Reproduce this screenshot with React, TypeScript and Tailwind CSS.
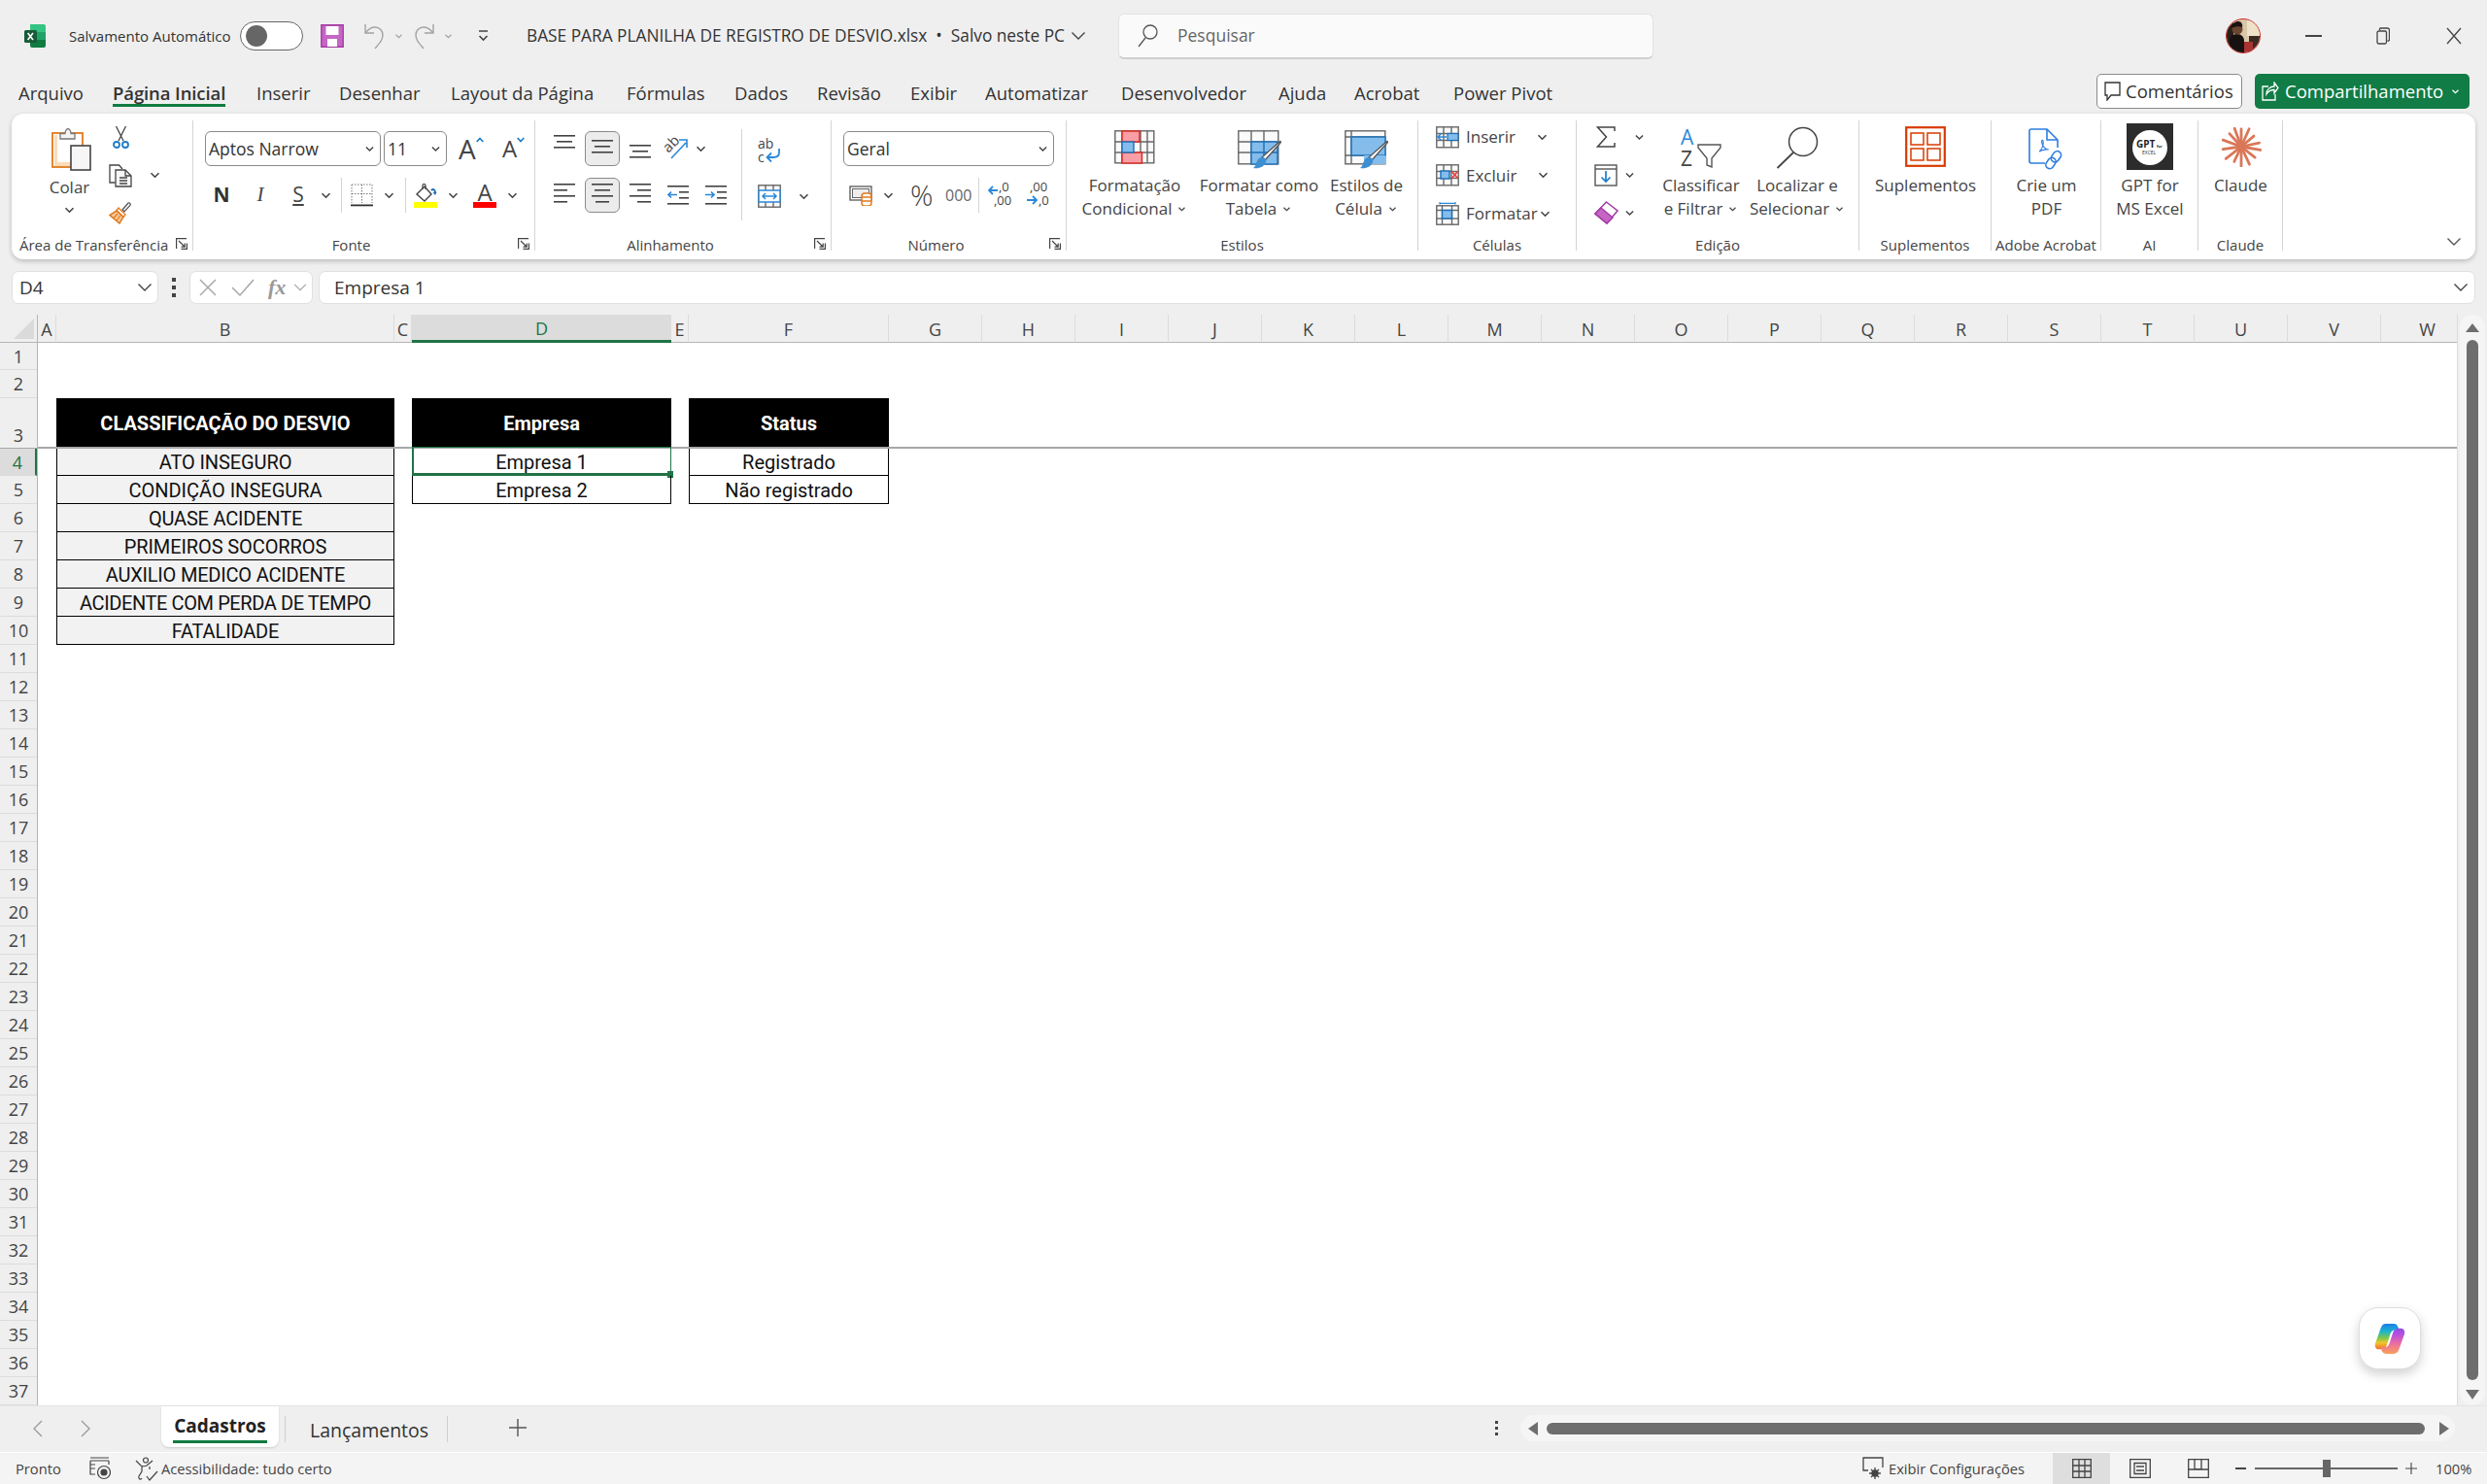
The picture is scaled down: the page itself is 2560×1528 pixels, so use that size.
import React from "react";

const dark = "#424242";
const blue = "#2b88d8";

function Chev({ className = "", color = "#444" }: { className?: string; color?: string }) {
  return (
    <svg width="11" height="7" viewBox="0 0 11 7" className={className} fill="none">
      <path d="M1.5 1.2 5.5 5.2 9.5 1.2" stroke={color} strokeWidth="1.6" />
    </svg>
  );
}

function BigChev({ className = "", color = "#555" }: { className?: string; color?: string }) {
  return (
    <svg width="16" height="10" viewBox="0 0 16 10" className={className} fill="none">
      <path d="M1.5 1.5 8 8 14.5 1.5" stroke={color} strokeWidth="1.4" />
    </svg>
  );
}

function Launcher() {
  return (
    <svg width="12" height="12" viewBox="0 0 12 12" fill="none" stroke="#444" strokeWidth="1.2">
      <path d="M.6 11V.6H11M11.4 5.5v5.9H5.5M3 3l6 6M9.2 5.5v3.7H5.5" />
    </svg>
  );
}

function ExcelIcon() {
  return (
    <svg width="24" height="24" viewBox="0 0 24 24" className="ml-[24px]">
      <path d="M7 0h14a2 2 0 0 1 2 2v6H7z" fill="#33c481" />
      <path d="M7 8h16v8H7z" fill="#21a366" />
      <path d="M7 16h16v6a2 2 0 0 1-2 2H9a2 2 0 0 1-2-2z" fill="#107c41" />
      <rect x="1" y="6" width="13" height="13" rx="1.5" fill="#185c37" />
      <path d="m4.6 9 5.4 7M10 9l-5.4 7" stroke="#fff" strokeWidth="1.6" />
    </svg>
  );
}

function SaveIcon() {
  return (
    <svg width="24" height="24" viewBox="0 0 24 24" className="ml-[18px]">
      <path d="M.8.8h22.4v22.4H.8z" fill="#c566c5" stroke="#a33ba3" strokeWidth="1.4" />
      <rect x="5.5" y="2" width="13" height="9" fill="#fff" />
      <rect x="7" y="15" width="10" height="8" fill="#fff" />
    </svg>
  );
}

function UndoIcon({ flip = false, className = "" }: { flip?: boolean; className?: string }) {
  return (
    <svg width="22" height="28" viewBox="0 0 22 28" fill="none" stroke="#a3a3a3" strokeWidth="1.4" className={className}>
      <g transform={flip ? "translate(22 0) scale(-1 1)" : undefined}>
        <path d="M2 2v9h9" />
        <path d="M2.5 10.5C6 6 9 5 12 5c5 0 8 4 8 8 0 5-3 8-8 14" />
      </g>
    </svg>
  );
}

function Lines({ rows, w = 22, color = dark }: { rows: [number, number][]; w?: number; color?: string }) {
  return (
    <svg width={w} height={rows.length * 6 + 1} viewBox={`0 0 ${w} ${rows.length * 6 + 1}`}>
      {rows.map((r, i) => (
        <rect key={i} x={r[0]} y={i * 6} width={r[1] - r[0]} height="1.6" fill={color} />
      ))}
    </svg>
  );
}

function IndentIcon({ right = false }: { right?: boolean }) {
  return (
    <svg width="22" height="20" viewBox="0 0 22 20">
      <rect x="0" y="0" width="22" height="1.6" fill={dark} />
      <rect x="12" y="6" width="10" height="1.6" fill={dark} />
      <rect x="12" y="12" width="10" height="1.6" fill={dark} />
      <rect x="0" y="18" width="22" height="1.6" fill={dark} />
      {right ? (
        <path d="M0 9.5h9M6 6.5l3 3-3 3" fill="none" stroke={blue} strokeWidth="1.7" />
      ) : (
        <path d="M10 9.5H1M4 6.5l-3 3 3 3" fill="none" stroke={blue} strokeWidth="1.7" />
      )}
    </svg>
  );
}

function TableGrid({ x = 0.8, y = 0.8, w, h, cols, rows }: { x?: number; y?: number; w: number; h: number; cols: number[]; rows: number[] }) {
  return (
    <g fill="none" stroke="#666" strokeWidth="1.4">
      <rect x={x} y={y} width={w} height={h} fill="#fafafa" />
      {cols.map((c) => (
        <path key={"c" + c} d={`M${c} ${y}v${h}`} />
      ))}
      {rows.map((r) => (
        <path key={"r" + r} d={`M${x} ${r}h${w}`} />
      ))}
    </g>
  );
}

function CondFormatIcon() {
  return (
    <svg width="42" height="35" viewBox="0 0 42 35">
      <TableGrid w={40} h={33} cols={[8, 27, 34]} rows={[12, 23]} />
      <rect x="8" y="1" width="18" height="11" fill="#f99ea4" stroke="#d9261c" strokeWidth="1.4" />
      <rect x="8" y="23" width="20.5" height="11" fill="#f99ea4" stroke="#d9261c" strokeWidth="1.4" />
      <rect x="8" y="12" width="12" height="11" fill="#84bcec" stroke="#1a6fb8" strokeWidth="1.4" />
    </svg>
  );
}

function Brush() {
  return (
    <g>
      <path d="M43 12c1-1 2 0 1 1L28 31l-3-3z" fill="#fff" stroke="#555" strokeWidth="1.3" />
      <path d="M25 28c3 0 5 2 4 5-2 5-7 7-13 6 3-2 2-4 4-7 1-3 3-4 5-4z" fill="#3d8fd1" />
    </g>
  );
}

function TableStyleIcon() {
  return (
    <svg width="45" height="41" viewBox="0 0 45 41">
      <TableGrid w={41} h={34} cols={[14, 27]} rows={[12, 23]} />
      <rect x="14" y="12" width="27" height="23" fill="#84bcec" stroke="#1a6fb8" strokeWidth="1.4" />
      <path d="M27 12v23M14 23h27" stroke="#1a6fb8" strokeWidth="1.4" />
      <Brush />
    </svg>
  );
}

function CellStyleIcon() {
  return (
    <svg width="45" height="41" viewBox="0 0 45 41">
      <TableGrid w={41} h={34} cols={[7]} rows={[7, 26]} />
      <rect x="7" y="7" width="35" height="19" fill="#84bcec" stroke="#1a6fb8" strokeWidth="1.4" />
      <rect x="20" y="26" width="22" height="9" fill="#84bcec" />
      <Brush />
    </svg>
  );
}

function InsertIcon() {
  return (
    <svg width="24" height="23" viewBox="0 0 24 23">
      <TableGrid w={22.4} h={21} cols={[8, 16]} rows={[7.5, 14.5]} />
      <rect x="12" y="7.5" width="11" height="7" fill="#84bcec" stroke="#1a6fb8" strokeWidth="1.2" />
      <path d="M11 11H2M5.5 7.5 2 11l3.5 3.5" fill="none" stroke={blue} strokeWidth="1.6" />
    </svg>
  );
}

function DeleteIcon() {
  return (
    <svg width="24" height="23" viewBox="0 0 24 23">
      <TableGrid w={22.4} h={21} cols={[8, 16]} rows={[7.5, 14.5]} />
      <rect x="5" y="7" width="9" height="8" fill="#84bcec" stroke="#1a6fb8" strokeWidth="1.4" />
      <path d="m16.5 7.5 6 7M22.5 7.5l-6 7" stroke="#e8403a" strokeWidth="1.8" />
    </svg>
  );
}

function FormatIcon() {
  return (
    <svg width="24" height="24" viewBox="0 0 24 24">
      <g transform="translate(0 3)">
        <TableGrid w={22.4} h={19.4} cols={[6.5, 16.5]} rows={[5.5, 14]} />
        <rect x="6.5" y="5.5" width="10" height="8.5" fill="#84bcec" stroke="#1a6fb8" strokeWidth="1.4" />
      </g>
      <path d="M4 1.3h16M4 0v2.6M20 0v2.6" stroke={blue} strokeWidth="1.2" fill="none" />
    </svg>
  );
}

function ClipboardIcon() {
  return (
    <svg width="41" height="45" viewBox="0 0 41 45" className="ml-[4px]">
      <rect x="1" y="6" width="31" height="35" fill="#fff" stroke="#e07a1f" strokeWidth="1.8" />
      <path d="M3 36h17v4H3z" fill="#fbdcb8" />
      <path d="M3 8h3v28H3z" fill="#fbdcb8" />
      <path d="M9 12V6.5h5c0-3 2-5 3-5s3 2 3 5h4V12z" fill="#f4f4f4" stroke="#777" strokeWidth="1.3" />
      <rect x="20" y="19" width="20" height="25" fill="#f6f6f6" stroke="#444" strokeWidth="1.6" />
    </svg>
  );
}

function ScissorsIcon() {
  return (
    <svg width="17" height="25" viewBox="0 0 17 25" fill="none">
      <path d="M3.5 1 11 16M13.5 1 6 16" stroke="#444" strokeWidth="1.3" />
      <circle cx="4" cy="20" r="3" stroke="#1f7cc7" strokeWidth="1.8" />
      <circle cx="13" cy="20" r="3" stroke="#1f7cc7" strokeWidth="1.8" />
    </svg>
  );
}

function CopyIcon() {
  return (
    <svg width="24" height="24" viewBox="0 0 24 24" fill="none" stroke="#444" strokeWidth="1.3">
      <path d="M6.5 19H1V1h9.5l3.5 4" />
      <path d="M7 6h10l6 6v11H7z" fill="#f7f7f7" />
      <path d="M17 6v6h6M11 14h8M11 17h8M11 20h8" />
    </svg>
  );
}

function PainterIcon() {
  return (
    <svg width="24" height="23" viewBox="0 0 24 23">
      <path d="m14 8 6-7c1-1 3 1 2 2.500l-6 6.500z" fill="#f3f3f3" stroke="#555" strokeWidth="1.2" />
      <path d="M10 6 17 13l-2 2.500L8 8.500z" fill="#fff" stroke="#e07a1f" strokeWidth="1.3" />
      <path d="M8 9 15 15.500 11 22 1 13.500z" fill="#f7c89a" stroke="#e07a1f" strokeWidth="1.5" />
      <path d="M5 16.500 9 12M8 19l4-5" stroke="#e07a1f" strokeWidth="1.2" />
    </svg>
  );
}

function BordersIcon() {
  return (
    <svg width="23" height="24" viewBox="0 0 23 24">
      <path d="M1 1h21v19M1 1v19M11.500 1v19M1 10.500h21" fill="none" stroke="#777" strokeWidth="1" strokeDasharray="1.500 1.500" />
      <rect x="0" y="21.500" width="23" height="1.800" fill="#333" />
    </svg>
  );
}

function FillIcon() {
  return (
    <svg width="24" height="25" viewBox="0 0 24 25">
      <path d="m11 3 7 8-7 7-8-7z" fill="#fff" stroke="#444" strokeWidth="1.4" />
      <path d="M9 6 V2c0-2 3-2 3 0v4" fill="none" stroke="#444" strokeWidth="1.2" />
      <path d="M18 7c2-2 4-1 4 3" fill="none" stroke="#1f6fb8" strokeWidth="2" />
      <path d="m19.500 9 2.500 3 1.500-3z" fill="#1f6fb8" />
      <rect x="0" y="19" width="24" height="6" fill="#ffff00" />
    </svg>
  );
}

function SumIcon() {
  return (
    <svg width="20" height="22" viewBox="0 0 20 22" fill="none" stroke="#444" strokeWidth="1.500" className="ml-[2px]">
      <path d="M19 5V1H1.500l9 10-9 10H19v-4" />
    </svg>
  );
}

function FillDownIcon() {
  return (
    <svg width="24" height="23" viewBox="0 0 24 23" fill="none">
      <rect x="1" y="1" width="22" height="21" fill="#fff" stroke="#555" strokeWidth="1.4" />
      <path d="M1 5h22" stroke="#555" strokeWidth="1.4" />
      <path d="M12 7v11M7.500 13.500 12 18l4.500-4.500" stroke="#1f7cc7" strokeWidth="1.7" />
    </svg>
  );
}

function EraserIcon() {
  return (
    <svg width="25" height="24" viewBox="0 0 25 24">
      <path d="M12.500 1 24 10 13 23 1 13z" fill="#fff" stroke="#a33ba3" strokeWidth="1.5" />
      <path d="M7 7 19 17 13 23 1 13z" fill="#c566c5" stroke="#a33ba3" strokeWidth="1.5" />
    </svg>
  );
}

function WrapIcon() {
  return (
    <svg width="24" height="28" viewBox="0 0 24 28" className="overflow-visible">
      <text x="0" y="11" fontSize="14" fill="#444">ab</text>
      <text x="0" y="25" fontSize="14" fill="#444">c</text>
      <path d="M22 11v4c0 4-3 5-6 5H10M14 15.500 9.500 20l4.500 4.500" fill="none" stroke={blue} strokeWidth="1.8" />
    </svg>
  );
}

function MergeIcon() {
  return (
    <svg width="24" height="24" viewBox="0 0 24 24">
      <TableGrid w={22.4} h={22.4} cols={[8, 16]} rows={[7, 17]} />
      <rect x="1" y="6" width="22" height="12" fill="#fff" stroke={blue} strokeWidth="1.5" />
      <path d="M5 12h14M8 9l-3 3 3 3M16 9l3 3-3 3" fill="none" stroke={blue} strokeWidth="1.5" />
    </svg>
  );
}

function OrientIcon() {
  return (
    <svg width="25" height="23" viewBox="0 0 25 23" className="overflow-visible">
      <text x="0" y="0" fontSize="15" fill="#444" transform="translate(5 17) rotate(-45)">ab</text>
      <path d="M8 22 23 6M16 3h8v8" fill="none" stroke={blue} strokeWidth="1.6" />
    </svg>
  );
}

function AccountingIcon() {
  return (
    <svg width="24" height="21" viewBox="0 0 24 21">
      <rect x="1" y="1" width="22" height="14" fill="#fff" stroke="#555" strokeWidth="1.3" />
      <rect x="3.500" y="3.500" width="17" height="9" fill="#eee" stroke="#666" strokeWidth="1" />
      <rect x="13" y="8" width="10" height="13" rx="3" fill="#fff" stroke="#e07a1f" strokeWidth="1.5" />
      <path d="M13 12h10M13 16h10" stroke="#e07a1f" strokeWidth="1.5" />
    </svg>
  );
}

function SortIcon() {
  return (
    <svg width="42" height="42" viewBox="0 0 42 42" className="overflow-visible">
      <text x="0" y="18" fontSize="21" fill={blue}>A</text>
      <text x="0" y="40" fontSize="21" fill="#444">Z</text>
      <path d="M18 18h23v3l-9 11v9l-5-2v-7l-9-11z" fill="#fff" stroke="#555" strokeWidth="1.4" />
    </svg>
  );
}

function FindIcon() {
  return (
    <svg width="44" height="44" viewBox="0 0 44 44" fill="none" stroke="#444">
      <circle cx="28" cy="16" r="14.500" strokeWidth="1.5" />
      <path d="M18 27 1.500 43" strokeWidth="1.8" />
    </svg>
  );
}

function AddInIcon() {
  return (
    <svg width="42" height="42" viewBox="0 0 42 42" fill="none" stroke="#d83b01">
      <rect x="1.200" y="1.200" width="39.600" height="39.600" strokeWidth="2.200" />
      <rect x="6" y="7" width="13" height="12" strokeWidth="1.500" />
      <rect x="23" y="7" width="13" height="12" strokeWidth="1.500" />
      <rect x="6" y="23" width="13" height="12" strokeWidth="1.500" />
      <rect x="23" y="23" width="13" height="12" strokeWidth="1.500" />
    </svg>
  );
}

function PdfIcon() {
  return (
    <svg width="38" height="43" viewBox="0 0 38 43" fill="none">
      <path d="M17 36H3a2 2 0 0 1-2-2V3a2 2 0 0 1 2-2h16l11 11v8" stroke="#2d7de0" strokeWidth="1.6" />
      <path d="M19 1v11h11" stroke="#2d7de0" strokeWidth="1.6" fill="none" />
      <path d="M11 24c3-2 5-8 4-11-1-2-2 0-1 3s4 6 6 6-4-1-9 2z" stroke="#2d7de0" strokeWidth="1.100" />
      <rect x="24.500" y="23" width="8" height="12" rx="4" transform="rotate(35 28 29)" stroke="#2d7de0" strokeWidth="1.600" />
      <rect x="19" y="30" width="8" height="12" rx="4" transform="rotate(35 23 36)" stroke="#2d7de0" strokeWidth="1.600" />
    </svg>
  );
}

function GptIcon() {
  return (
    <svg width="48" height="48" viewBox="0 0 48 48">
      <rect width="48" height="48" fill="#2c2c2c" />
      <circle cx="24" cy="25" r="18" fill="#fff" />
      <text x="10" y="25" fontSize="10" fontWeight="700" fill="#222">GPT</text>
      <text x="31" y="25" fontSize="4" fontWeight="700" fill="#222">for</text>
      <text x="16" y="32" fontSize="5" fill="#333">EXCEL</text>
    </svg>
  );
}

function ClaudeIcon() {
  const rays: [number, number][] = [
    [0, 18], [24, 20], [50, 17], [78, 19], [100, 20], [128, 18], [155, 20], [180, 20], [205, 17], [232, 20], [262, 19], [290, 20], [318, 18], [340, 20],
  ];
  return (
    <svg width="42" height="42" viewBox="-21 -21 42 42" stroke="#d97757" strokeWidth="2.800" strokeLinecap="round">
      {rays.map(([a, l]) => (
        <line key={a} x1="0" y1="0" x2={Math.sin((a * Math.PI) / 180) * l} y2={-Math.cos((a * Math.PI) / 180) * l} />
      ))}
    </svg>
  );
}

function Avatar() {
  return (
    <svg width="36" height="36" viewBox="0 0 36 36" className="ml-[589px]">
      <defs>
        <clipPath id="av">
          <circle cx="18" cy="18" r="17" />
        </clipPath>
      </defs>
      <circle cx="18" cy="18" r="17.500" fill="#d8c7a8" stroke="#d02c2c" />
      <g clipPath="url(#av)">
        <rect x="22" y="2" width="14" height="16" fill="#eee2c8" />
        <rect x="24" y="18" width="12" height="18" fill="#3a2a20" />
        <rect x="0" y="0" width="8" height="36" fill="#2a201a" />
        <path d="M4 36V22c0-4 4-6 8-6s7 3 7 7v13z" fill="#17120f" />
        <circle cx="12" cy="11" r="5.500" fill="#6b4630" />
        <path d="M6 10c0-5 4-7 7-7s5 3 4 6c-3-1-7-1-11 1z" fill="#1b1410" />
        <rect x="19" y="24" width="9" height="12" fill="#a33" />
      </g>
    </svg>
  );
}

function Copilot() {
  return (
    <svg width="32" height="33" viewBox="0 0 30 32">
      <defs>
        <linearGradient id="cl" x1="0" y1="0" x2="0" y2="1">
          <stop offset="0" stopColor="#1d7ee8" />
          <stop offset="0.3" stopColor="#1bb5cf" />
          <stop offset="0.55" stopColor="#7cc84a" />
          <stop offset="0.75" stopColor="#f0c52c" />
          <stop offset="1" stopColor="#f26a2e" />
        </linearGradient>
        <linearGradient id="cr" x1="0" y1="0" x2="0" y2="1">
          <stop offset="0" stopColor="#f9a05a" />
          <stop offset="0.4" stopColor="#ea6ea0" />
          <stop offset="0.75" stopColor="#b650dc" />
          <stop offset="1" stopColor="#8f4de8" />
        </linearGradient>
      </defs>
      <path d="M11 1h8c2.500 0 3.500 1.500 4.500 4l.7 2.500H20c-3 0-4 2-5 5l-3 9.500c-1 3-3 4.500-6 4.500H4c-3 0-4.500-3-3.500-6L6 5c1-2.500 2.500-4 5-4z" fill="url(#cl)" />
      <path d="M11 1h8c2.500 0 3.500 1.500 4.500 4l.7 2.500H20c-3 0-4 2-5 5l-3 9.500c-1 3-3 4.500-6 4.500H4c-3 0-4.500-3-3.500-6L6 5c1-2.500 2.500-4 5-4z" fill="url(#cr)" transform="rotate(180 15 16)" />
    </svg>
  );
}

function Group({ w, label, launcher = false, labelClass = "", children }: { w: string; label: string; launcher?: boolean; labelClass?: string; children?: React.ReactNode }) {
  return (
    <div className={`${w} h-[134px] shrink-0 flex flex-col border-r border-[#d4d4d4]`}>
      <div className="h-[119px] shrink-0 flex">{children}</div>
      <div className="h-[18px] shrink-0 flex items-center text-[15px] leading-[18px] text-[#444]">
        <span className={`flex-1 text-center whitespace-nowrap ${labelClass}`}>{label}</span>
        {launcher && (
          <span className="w-[26px] flex justify-end pr-[5px] -mt-[2px]">
            <Launcher />
          </span>
        )}
      </div>
    </div>
  );
}

function BigBtn({ w, icon, iconBox = "h-[45px]", top = "pt-[10px]", lines, chev = false }: { w: string; icon: React.ReactNode; iconBox?: string; top?: string; lines: string[]; chev?: boolean }) {
  return (
    <div className={`${w} ${top} shrink-0 flex flex-col items-center`}>
      <div className={`${iconBox} flex items-start justify-center`}>{icon}</div>
      {lines.map((l, i) => (
        <div key={l} className="h-[24px] leading-[24px] text-[17px] text-[#444] whitespace-nowrap flex items-center">
          {l}
          {chev && i === lines.length - 1 && <Chev className="ml-[5px] scale-75" />}
        </div>
      ))}
    </div>
  );
}

function Select({ w, text }: { w: string; text: string }) {
  return (
    <div className={`${w} h-[36px] shrink-0 flex items-center justify-between border border-[#8a8a8a] rounded-[6px] pl-[3px] pr-[5px] text-[17.500px] text-[#333] bg-white`}>
      <span>{text}</span>
      <Chev className="scale-90" />
    </div>
  );
}

function ToggleBox({ children }: { children: React.ReactNode }) {
  return (
    <div className="w-[36px] h-[36px] mx-[1.500px] flex items-center justify-center rounded-[6px] bg-[#ececec] border border-[#8a8a8a]">{children}</div>
  );
}

function FontStep({ size, down = false, w }: { size: string; down?: boolean; w: string }) {
  return (
    <span className={`${w} ${size} h-[36px] leading-[36px] text-[#444] flex items-start`}>
      A
      <svg width="8" height="6" viewBox="0 0 8 6" fill="none" stroke="#1f7cc7" strokeWidth="1.700" className="mt-[6px]">
        <path d={down ? "M.7 1 4 4.500 7.300 1" : "M.7 5 4 1.500 7.300 5"} />
      </svg>
    </span>
  );
}

function Ribbon() {
  const a4: [number, number][] = [[0, 22], [0, 14], [0, 22], [0, 14]];
  const c4: [number, number][] = [[0, 22], [3, 19], [0, 22], [4, 18]];
  const r4: [number, number][] = [[0, 22], [8, 22], [0, 22], [8, 22]];
  const v3: [number, number][] = [[0, 22], [3, 19], [0, 22]];
  return (
    <div className="mx-[12px] h-[150px] shrink-0 bg-white rounded-[12px] shadow-[0_2px_5px_rgba(0,0,0,0.22)] flex py-[7px]">
      <Group w="w-[187px]" label="Área de Transferência" launcher labelClass="pl-[8px]">
        <div className="w-[88px] pl-[31px] pt-[7px] flex flex-col items-center shrink-0">
          <ClipboardIcon />
          <div className="mt-[5px] h-[24px] leading-[24px] text-[17px] text-[#444]">Colar</div>
          <Chev className="mt-[8px]" />
        </div>
        <div className="flex flex-col pt-[5px] gap-[15px] w-[24px] ml-[12px] items-center shrink-0">
          <ScissorsIcon />
          <CopyIcon />
          <PainterIcon />
        </div>
        <Chev className="ml-[18px] mt-[53px]" />
      </Group>

      <Group w="w-[352px]" label="Fonte" launcher>
        <div className="flex flex-col">
          <div className="flex items-center pl-[12px] pt-[11px] gap-[3px]">
            <Select w="w-[181px]" text="Aptos Narrow" />
            <Select w="w-[65px]" text="11" />
            <FontStep w="ml-[9px] w-[42px]" size="text-[28px]" />
            <FontStep w="w-[36px]" size="text-[24px]" down />
          </div>
          <div className="flex items-center pl-[9px] mt-[12px] h-[36px]">
            <span className="w-[40px] text-center text-[21px] font-bold text-[#333]">N</span>
            <span className="w-[40px] text-center text-[21px] italic font-['Liberation_Serif',serif] text-[#444]">I</span>
            <span className="w-[38px] text-center text-[21px] underline text-[#444]">S</span>
            <span className="w-[18px] flex justify-center"><Chev /></span>
            <span className="w-[1px] h-[36px] bg-[#d4d4d4] ml-[7px]" />
            <span className="ml-[9px]"><BordersIcon /></span>
            <span className="w-[33px] flex justify-center"><Chev /></span>
            <span className="w-[1px] h-[36px] bg-[#d4d4d4]" />
            <span className="ml-[8px]"><FillIcon /></span>
            <span className="w-[32px] flex justify-center"><Chev /></span>
            <span className="ml-[5px] w-[24px] flex flex-col items-center text-[#444]">
              <span className="text-[24px] leading-[20px] h-[20px]">A</span>
              <span className="w-[24px] h-[6px] bg-[#ff0000]" />
            </span>
            <span className="w-[32px] flex justify-center"><Chev /></span>
          </div>
        </div>
      </Group>

      <Group w="w-[305px]" label="Alinhamento" launcher>
        <div className="flex flex-col pl-[10px] pt-[11px]">
          <div className="flex h-[36px] items-center">
            <div className="w-[39px] flex justify-center -mt-[10px]"><Lines rows={v3} /></div>
            <div className="w-[39px]"><ToggleBox><Lines rows={v3} /></ToggleBox></div>
            <div className="w-[39px] flex justify-center mt-[10px]"><Lines rows={v3} /></div>
            <div className="ml-[5px] -mt-[2px]"><OrientIcon /></div>
            <Chev className="ml-[8px]" />
          </div>
          <div className="flex h-[36px] items-center mt-[12px]">
            <div className="w-[39px] flex justify-center"><Lines rows={a4} /></div>
            <div className="w-[39px]"><ToggleBox><Lines rows={c4} /></ToggleBox></div>
            <div className="w-[39px] flex justify-center"><Lines rows={r4} /></div>
            <div className="w-[39px] flex justify-center"><IndentIcon /></div>
            <div className="w-[39px] flex justify-center"><IndentIcon right /></div>
          </div>
        </div>
        <span className="w-[1px] h-[94px] bg-[#d4d4d4] mt-[9px] ml-[7px]" />
        <div className="flex flex-col pl-[16px] pt-[18px]">
          <WrapIcon />
          <div className="flex items-center mt-[20px]">
            <MergeIcon />
            <Chev className="ml-[18px]" />
          </div>
        </div>
      </Group>

      <Group w="w-[242px]" label="Número" launcher>
        <div className="flex flex-col pl-[12px] pt-[11px]">
          <Select w="w-[217px]" text="Geral" />
          <div className="flex items-center mt-[12px] h-[36px] pl-[6px] text-[#444]">
            <AccountingIcon />
            <Chev className="ml-[11px]" />
            <span className="ml-[17px] w-[26px] text-[29px] leading-[36px] font-light">%</span>
            <span className="ml-[10px] w-[34px] text-[16px] text-[#666]">000</span>
            <span className="w-[1px] h-[36px] bg-[#d4d4d4]" />
            <svg width="24" height="28" viewBox="0 0 24 28" className="ml-[9px] overflow-visible">
              <text x="11" y="10" fontSize="13" fill="#444">,0</text>
              <text x="6" y="24" fontSize="13" fill="#444">,00</text>
              <path d="M10 9H1M5 5 1 9l4 4" fill="none" stroke={blue} strokeWidth="1.800" />
            </svg>
            <svg width="24" height="28" viewBox="0 0 24 28" className="ml-[15px] overflow-visible">
              <text x="4" y="10" fontSize="13" fill="#444">,00</text>
              <text x="13" y="24" fontSize="13" fill="#444">,0</text>
              <path d="M1 19h10M7 15l4 4-4 4" fill="none" stroke={blue} strokeWidth="1.800" />
            </svg>
          </div>
        </div>
      </Group>

      <Group w="w-[362px]" label="Estilos">
        <BigBtn w="w-[140px]" icon={<CondFormatIcon />} lines={["Formatação", "Condicional"]} chev />
        <BigBtn w="w-[116px]" icon={<TableStyleIcon />} lines={["Formatar como", "Tabela"]} chev />
        <BigBtn w="w-[105px]" icon={<CellStyleIcon />} lines={["Estilos de", "Célula"]} chev />
      </Group>

      <Group w="w-[163px]" label="Células">
        <div className="flex flex-col pl-[18px] gap-[5.500px] text-[17px] text-[#444]">
          <div className="h-[34px] flex items-center">
            <InsertIcon />
            <span className="ml-[7px] w-[73px]">Inserir</span>
            <Chev />
          </div>
          <div className="h-[34px] flex items-center">
            <DeleteIcon />
            <span className="ml-[7px] w-[74px]">Excluir</span>
            <Chev />
          </div>
          <div className="h-[34px] flex items-center">
            <FormatIcon />
            <span className="ml-[7px] w-[76px]">Formatar</span>
            <Chev />
          </div>
        </div>
      </Group>

      <Group w="w-[291px]" label="Edição">
        <div className="w-[76px] shrink-0 pl-[18px] flex flex-col">
          <div className="h-[34px] flex items-center">
            <SumIcon />
            <Chev className="ml-[19px] scale-90" />
          </div>
          <div className="h-[23px] mt-[11px] flex items-center">
            <FillDownIcon />
            <Chev className="ml-[7px] scale-90" />
          </div>
          <div className="h-[24px] mt-[15px] flex items-center">
            <EraserIcon />
            <Chev className="ml-[6px] scale-90" />
          </div>
        </div>
        <BigBtn w="w-[104px]" top="pt-[7px]" iconBox="h-[48px]" icon={<SortIcon />} lines={["Classificar", "e Filtrar"]} chev />
        <BigBtn w="w-[94px]" top="pt-[6px]" iconBox="h-[49px]" icon={<FindIcon />} lines={["Localizar e", "Selecionar"]} chev />
      </Group>

      <Group w="w-[136px]" label="Suplementos">
        <BigBtn w="w-[136px]" top="pt-[6px]" iconBox="h-[49px]" icon={<AddInIcon />} lines={["Suplementos"]} />
      </Group>
      <Group w="w-[113px]" label="Adobe Acrobat">
        <BigBtn w="w-[113px]" top="pt-[8px]" iconBox="h-[47px]" icon={<PdfIcon />} lines={["Crie um", "PDF"]} />
      </Group>
      <Group w="w-[100px]" label="AI">
        <BigBtn w="w-[100px]" top="pt-[3px]" iconBox="h-[52px]" icon={<GptIcon />} lines={["GPT for", "MS Excel"]} />
      </Group>
      <Group w="w-[87px]" label="Claude">
        <BigBtn w="w-[87px]" top="pt-[6px]" iconBox="h-[49px]" icon={<ClaudeIcon />} lines={["Claude"]} />
      </Group>
      <div className="flex-1 flex items-end justify-end pr-[14px] pb-[6px]">
        <BigChev />
      </div>
    </div>
  );
}

function TitleBar() {
  return (
    <div className="h-[74px] shrink-0 flex items-center text-[#333]">
      <ExcelIcon />
      <span className="ml-[23px] w-[166px] text-[15px] whitespace-nowrap">Salvamento Automático</span>
      <div className="ml-[10px] w-[65px] h-[30px] rounded-full border border-[#666] bg-white flex items-center pl-[5px]">
        <span className="w-[22px] h-[22px] rounded-full bg-[#666]" />
      </div>
      <SaveIcon />
      <UndoIcon className="ml-[20px]" />
      <Chev className="ml-[9px] scale-75" color="#a3a3a3" />
      <UndoIcon flip className="ml-[10px]" />
      <Chev className="ml-[8px] scale-75" color="#a3a3a3" />
      <svg width="11" height="14" viewBox="0 0 11 14" className="ml-[25px]" fill="none" stroke="#444" strokeWidth="1.600">
        <path d="M1 2h9M1.500 7 5.500 11 9.500 7" />
      </svg>
      <span className="ml-[39px] text-[17.300px] whitespace-nowrap w-[559px]">BASE PARA PLANILHA DE REGISTRO DE DESVIO.xlsx&nbsp;&nbsp;•&nbsp;&nbsp;Salvo neste PC</span>
      <BigChev className="ml-[1px]" color="#444" />
      <div className="ml-[33px] w-[551px] h-[47px] bg-[#fafafa] rounded-[6px] border border-[#e2e2e2] border-b-2 border-b-[#cfcfcf] flex items-center pl-[19px] text-[17.500px] text-[#666]">
        <svg width="21" height="24" viewBox="0 0 21 24" fill="none" stroke="#555" strokeWidth="1.300">
          <circle cx="13" cy="8" r="7" />
          <path d="M8 14 1 23" />
        </svg>
        <span className="ml-[20px]">Pesquisar</span>
      </div>
      <Avatar />
      <span className="ml-[46px] w-[17px] h-[2px] bg-[#444]" />
      <svg width="14" height="18" viewBox="0 0 14 18" fill="none" stroke="#444" strokeWidth="1.300" className="ml-[56px]">
        <path d="M3.500 3V2a1 1 0 0 1 1-1h7a2 2 0 0 1 2 2v10a1 1 0 0 1-1 1h-1" />
        <rect x="1" y="4" width="9.500" height="13" rx="1.500" />
      </svg>
      <svg width="16" height="18" viewBox="0 0 16 18" stroke="#444" strokeWidth="1.300" className="ml-[58px]">
        <path d="M1 1l14 16M15 1 1 17" />
      </svg>
    </div>
  );
}

const tabs: [string, string][] = [
  ["Arquivo", "w-[97px]"],
  ["Página Inicial", "w-[148px]"],
  ["Inserir", "w-[85px]"],
  ["Desenhar", "w-[115px]"],
  ["Layout da Página", "w-[181px]"],
  ["Fórmulas", "w-[111px]"],
  ["Dados", "w-[85px]"],
  ["Revisão", "w-[96px]"],
  ["Exibir", "w-[77px]"],
  ["Automatizar", "w-[140px]"],
  ["Desenvolvedor", "w-[162px]"],
  ["Ajuda", "w-[78px]"],
  ["Acrobat", "w-[102px]"],
  ["Power Pivot", "w-[120px]"],
];

function TabRow() {
  return (
    <div className="h-[43px] shrink-0 flex pl-[19px] text-[18.500px] text-[#333]">
      {tabs.map(([t, w]) => (
        <div key={t} className={`${w} h-[43px] shrink-0 whitespace-nowrap flex flex-col`}>
          <span className="h-[36px] leading-[44px] flex">
            <span className={`relative inline-block ${t === "Página Inicial" ? "font-semibold tracking-[-0.1px]" : ""}`}>
              {t}
              {t === "Página Inicial" && <span className="absolute left-0 right-0 top-[33px] h-[3px] bg-[#107c41]" />}
            </span>
          </span>
        </div>
      ))}
      <div className="ml-[542px] w-[150px] h-[36px] mt-[2px] border border-[#8a8a8a] rounded-[5px] bg-white flex items-center pl-[7px] shrink-0">
        <svg width="17" height="20" viewBox="0 0 17 20" fill="none" stroke="#333" strokeWidth="1.300">
          <path d="M1 1h15v13H7l-4 5v-5H1z" />
        </svg>
        <span className="ml-[5px]">Comentários</span>
      </div>
      <div className="ml-[13px] w-[221px] h-[36px] mt-[2px] rounded-[5px] bg-[#117c45] text-white flex items-center pl-[7px] shrink-0">
        <svg width="18" height="20" viewBox="0 0 18 20" fill="none" stroke="#fff" strokeWidth="1.300">
          <path d="M7 5H1v14h13v-6M5 13c0-5 4-8 8-8V1l4 5.500L13 12V8.500c-3 0-6 1-8 4.500z" />
        </svg>
        <span className="ml-[6px]">Compartilhamento</span>
        <Chev className="ml-[7px] scale-75" color="#fff" />
      </div>
    </div>
  );
}

function FormulaBar() {
  return (
    <div className="mx-[12px] mt-[12px] h-[34px] shrink-0 flex items-center text-[19px] text-[#333]">
      <div className="w-[151px] h-[34px] shrink-0 bg-white border border-[#e0e0e0] rounded-[7px] flex items-center pl-[7px]">
        <span className="w-[26px]">D4</span>
        <BigChev className="ml-[95px]" color="#444" />
      </div>
      <div className="w-[32px] shrink-0 flex flex-col items-center gap-[4px]">
        <span className="w-[4px] h-[4px] bg-[#444]" />
        <span className="w-[4px] h-[4px] bg-[#444]" />
        <span className="w-[4px] h-[4px] bg-[#444]" />
      </div>
      <div className="w-[127px] h-[34px] shrink-0 bg-white border border-[#e0e0e0] rounded-[7px] flex items-center pl-[9px]">
        <svg width="18" height="18" viewBox="0 0 18 18" stroke="#a8a8a8" strokeWidth="1.500">
          <path d="M1 1l16 16M17 1 1 17" />
        </svg>
        <svg width="24" height="18" viewBox="0 0 24 18" stroke="#a8a8a8" strokeWidth="1.500" fill="none" className="ml-[15px]">
          <path d="M1 9l8 8L23 1" />
        </svg>
        <span className="ml-[14px] w-[27px] text-[22px] leading-[30px] italic text-[#999] font-['Liberation_Serif',serif] font-bold">fx</span>
        <BigChev className="scale-90 -ml-[2px]" color="#a8a8a8" />
      </div>
      <div className="ml-[6px] flex-1 h-[34px] bg-white border border-[#e0e0e0] rounded-[7px] flex items-center justify-between pl-[15px] pr-[6px]">
        <span>Empresa 1</span>
        <BigChev color="#444" />
      </div>
    </div>
  );
}

const columns: [string, string][] = [
  ["A", "w-[19px]"],
  ["B", "w-[348px]"],
  ["C", "w-[18px]"],
  ["D", "w-[267px]"],
  ["E", "w-[18px]"],
  ["F", "w-[206px]"],
  ...["G", "H", "I", "J", "K", "L", "M", "N", "O", "P", "Q", "R", "S", "T", "U", "V", "W"].map((c): [string, string] => [c, "w-[96px]"]),
];

function ColumnHeaders() {
  return (
    <div className="h-[29px] flex overflow-hidden">
      <div className="w-[39px] shrink-0 border-b border-[#b5b5b5] flex items-center justify-end pr-[3px] border-r">
        <span className="w-0 h-0 border-l-[21px] border-l-transparent border-b-[21px] border-b-[#dadada]" />
      </div>
      {columns.map(([c, w]) => (
        <div
          key={c}
          className={`${w} shrink-0 pt-[2px] flex items-center justify-center text-[18px] leading-[26px] ${
            c === "D" ? "bg-[#dcdcdc] text-[#217346] border-b-[3px] border-[#217346]" : "text-[#444] border-b border-r border-b-[#b5b5b5] border-r-[#dcdcdc]"
          }`}
        >
          {c}
        </div>
      ))}
    </div>
  );
}

function RowHeaders() {
  const nums = Array.from({ length: 37 }, (_, i) => i + 1);
  const height = (n: number) => (n === 3 ? "h-[52px] border-b-[#a8a8a8] items-end" : n === 1 || n === 4 ? "h-[28px] items-center" : "h-[29px] items-center");
  return (
    <div className="w-[39px] shrink-0 flex flex-col border-r border-[#b5b5b5]">
      {nums.map((n) => (
        <div
          key={n}
          className={`${height(n)} shrink-0 flex justify-center border-b border-[#dcdcdc] text-[18px] leading-[26px] ${
            n === 4 ? "bg-[#dcdcdc] text-[#217346] border-r-[2px] border-r-[#217346]" : "text-[#444]"
          }`}
        >
          {n}
        </div>
      ))}
    </div>
  );
}

const sheetCols = "grid grid-cols-[19px_348px_18px_267px_18px_206px]";
const cellFont = "font-['Roboto',sans-serif] text-[20px] leading-[25px] pt-[2px] text-[#111] flex items-center justify-center whitespace-nowrap";
const headFont = "bg-black text-white font-bold font-['Roboto',sans-serif] text-[20px] pt-[2px] flex items-center justify-center whitespace-nowrap";

const rows: [string, string, string, string][] = [
  ["ATO INSEGURO", "Empresa 1", "Registrado", "tracking-[-0.1px]"],
  ["CONDIÇÃO INSEGURA", "Empresa 2", "Não registrado", "tracking-[0px]"],
  ["QUASE ACIDENTE", "", "", "tracking-[-0.2px]"],
  ["PRIMEIROS SOCORROS", "", "", "tracking-[-0.1px]"],
  ["AUXILIO MEDICO ACIDENTE", "", "", "tracking-[-0.2px]"],
  ["ACIDENTE COM PERDA DE TEMPO", "", "", "tracking-[-0.4px]"],
  ["FATALIDADE", "", "", "tracking-[-0.15px]"],
];

function Sheet() {
  return (
    <div className="flex-1 bg-white overflow-hidden">
      <div className="h-[57px]" />
      <div className={`${sheetCols} h-[50px]`}>
        <div />
        <div className={headFont}>CLASSIFICAÇÃO DO DESVIO</div>
        <div />
        <div className={headFont}>Empresa</div>
        <div />
        <div className={headFont}>Status</div>
      </div>
      <div className="h-[2px] bg-[#a8a8a8]" />
      {rows.map(([b, d, f, track], i) => (
        <div key={b} className={`${sheetCols} ${i === 0 ? "h-[28px]" : "h-[29px]"}`}>
          <div />
          <div className={`${cellFont} ${track} bg-[#f2f2f2] border-x border-b border-black`}>{b}</div>
          <div />
          {d ? (
            <div className={`${cellFont} relative border-x border-b border-black`}>
              {d}
              {i === 0 && (
                <>
                  <span className="absolute -left-[1px] -top-[2px] -right-[1px] -bottom-[1px] border-[2px] border-[#217346] border-t-[1px] border-r-[1px] border-b-[3px]" />
                  <span className="absolute -right-[3px] -bottom-[3px] w-[6px] h-[7px] bg-[#217346]" />
                </>
              )}
            </div>
          ) : (
            <div />
          )}
          <div />
          {f ? <div className={`${cellFont} border-x border-b border-black`}>{f}</div> : <div />}
        </div>
      ))}
    </div>
  );
}

function VScrollbar() {
  return (
    <div className="w-[30px] shrink-0 pl-[2px] pr-[2px]">
      <div className="h-full rounded-full bg-[#f5f5f5] flex flex-col items-center pt-[9px]">
        <span className="w-0 h-0 border-x-[7px] border-x-transparent border-b-[9px] border-b-[#6e6e6e]" />
        <span className="mt-[8px] w-[12px] h-[1071px] rounded-full bg-[#6e6e6e]" />
        <span className="mt-[10px] w-0 h-0 border-x-[7px] border-x-transparent border-t-[10px] border-t-[#6e6e6e]" />
      </div>
    </div>
  );
}

function SheetTabs() {
  return (
    <div className="h-[48px] shrink-0 flex border-t border-[#e4e4e4]">
      <svg width="10" height="18" viewBox="0 0 10 18" fill="none" stroke="#9a9a9a" strokeWidth="1.300" className="ml-[34px] mt-[14px]">
        <path d="M9 1 1 9l8 8" />
      </svg>
      <svg width="10" height="18" viewBox="0 0 10 18" fill="none" stroke="#9a9a9a" strokeWidth="1.300" className="ml-[39px] mt-[14px]">
        <path d="m1 1 8 8-8 8" />
      </svg>
      <div className="ml-[73px] w-[121px] h-[42px] bg-white rounded-b-[8px] shadow-[0_1px_2px_rgba(0,0,0,0.15)] flex flex-col items-center">
        <span className="h-[35px] font-bold text-[#222] leading-[40px] text-[19px] whitespace-nowrap">Cadastros</span>
        <span className="w-[97px] h-[3px] bg-[#107c41]" />
      </div>
      <span className="ml-[6px] mt-[10px] w-[1px] h-[27px] bg-[#cfcfcf]" />
      <span className="ml-[25px] w-[121px] leading-[50px] text-[#333] text-[19.500px] whitespace-nowrap">Lançamentos</span>
      <span className="ml-[20px] mt-[10px] w-[1px] h-[27px] bg-[#cfcfcf]" />
      <svg width="18" height="18" viewBox="0 0 18 18" stroke="#555" strokeWidth="1.400" className="ml-[63px] mt-[13px]">
        <path d="M9 0v18M0 9h18" />
      </svg>
      <div className="ml-[997px] mt-[15px] flex flex-col gap-[3px]">
        <span className="w-[3px] h-[3px] bg-[#444]" />
        <span className="w-[3px] h-[3px] bg-[#444]" />
        <span className="w-[3px] h-[3px] bg-[#444]" />
      </div>
      <div className="ml-[23px] mt-[9px] w-[962px] h-[27px] rounded-full bg-[#f5f5f5] flex items-center pl-[8px]">
        <span className="w-0 h-0 border-y-[7px] border-y-transparent border-r-[10px] border-r-[#6e6e6e]" />
        <span className="ml-[9px] w-[904px] h-[12px] rounded-full bg-[#6e6e6e]" />
        <span className="ml-[15px] w-0 h-0 border-y-[7px] border-y-transparent border-l-[10px] border-l-[#6e6e6e]" />
      </div>
    </div>
  );
}

function StatusBar() {
  return (
    <div className="h-[33px] shrink-0 bg-[#f4f4f4] border-t border-white flex items-center text-[14.700px] text-[#444]">
      <span className="ml-[16px] w-[47px]">Pronto</span>
      <svg width="22" height="24" viewBox="0 0 22 24" fill="none" stroke="#444" strokeWidth="1.200" className="ml-[29px]">
        <path d="M1 1h19M1 4h19M1 4v14h5M1 8h5M1 12h5M20 4v4" />
        <circle cx="15" cy="16" r="6.500" />
        <circle cx="15" cy="16" r="3" fill="#444" />
      </svg>
      <svg width="24" height="25" viewBox="0 0 24 25" fill="none" stroke="#444" strokeWidth="1.200" className="ml-[25px]">
        <circle cx="11" cy="3.500" r="2.500" />
        <path d="M1 4l5 5c2 1 4 1 6 0l6-5M7 10v5l-3 5c-1 3 2 4 3 2M15 10v3M12 20l3 4 8-9" />
      </svg>
      <span className="ml-[3px] whitespace-nowrap w-[176px]">Acessibilidade: tudo certo</span>
      <svg width="22" height="24" viewBox="0 0 22 24" fill="none" stroke="#444" strokeWidth="1.300" className="ml-[1575px]">
        <path d="M6 14H1V1h20v10" />
        <circle cx="13" cy="17" r="3" fill="#444" />
        <path d="M13 11v12M7 17h12M9 13l8 8M17 13l-8 8" />
      </svg>
      <span className="ml-[5px] w-[169px] whitespace-nowrap">Exibir Configurações</span>
      <div className="w-[59px] h-[32px] bg-[#dedede] flex items-center justify-center">
        <svg width="20" height="20" viewBox="0 0 20 20" fill="none" stroke="#444" strokeWidth="1.300">
          <path d="M.7.7h18.600v18.600H.7zM7 .7v18.600M13 .7v18.600M.7 7h18.600M.7 13h18.600" />
        </svg>
      </div>
      <svg width="22" height="20" viewBox="0 0 22 20" fill="none" stroke="#444" strokeWidth="1.300" className="ml-[20px]">
        <path d="M.7.7h20.600v18.600H.7zM5 4.500h12v11H5zM7 8h8M7 12h8" />
      </svg>
      <svg width="22" height="20" viewBox="0 0 22 20" fill="none" stroke="#444" strokeWidth="1.300" className="ml-[38px]">
        <path d="M.7.700h20.600v18.600H.7zM7 .7v10h7V.7M.7 11H21" />
      </svg>
      <span className="ml-[27px] w-[11px] h-[1.500px] bg-[#444]" />
      <div className="ml-[9px] w-[147px] h-[18px] flex items-center relative">
        <span className="w-full h-[2px] bg-[#666]" />
        <span className="absolute left-[70px] top-0 w-[8px] h-[18px] bg-[#666]" />
      </div>
      <svg width="12" height="12" viewBox="0 0 12 12" stroke="#444" strokeWidth="1.100" className="ml-[8px]">
        <path d="M6 0v12M0 6h12" />
      </svg>
      <span className="ml-[19px]">100%</span>
    </div>
  );
}

export default function App() {
  return (
    <div className="relative w-[2560px] h-[1528px] overflow-hidden bg-[#efefef] flex flex-col font-['Open_Sans',sans-serif]">
      <TitleBar />
      <TabRow />
      <Ribbon />
      <FormulaBar />
      <div className="mt-[11px] h-[1123px] shrink-0 flex">
        <div className="w-[2530px] shrink-0 flex flex-col border-r border-[#dcdcdc]">
          <ColumnHeaders />
          <div className="flex-1 flex overflow-hidden">
            <RowHeaders />
            <Sheet />
          </div>
        </div>
        <VScrollbar />
      </div>
      <SheetTabs />
      <StatusBar />
      <div className="absolute left-[2428px] top-[1346px] w-[64px] h-[64px] rounded-[20px] bg-white border border-[#dedede] shadow-[0_5px_12px_rgba(0,0,0,0.18)] flex items-center justify-center">
        <Copilot />
      </div>
    </div>
  );
}
